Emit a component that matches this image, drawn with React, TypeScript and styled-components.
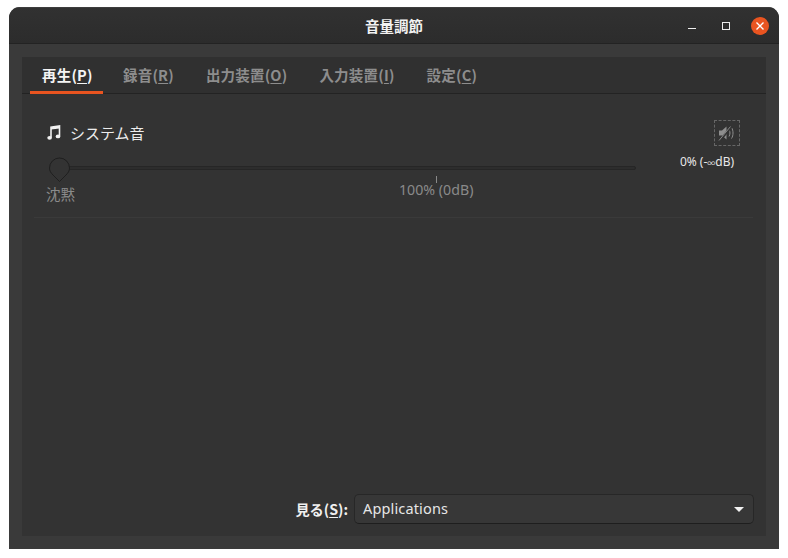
import React from "react";
import styled, { createGlobalStyle } from "styled-components";

const Global = createGlobalStyle`
  html, body { margin: 0; padding: 0; background: #fff; width: 788px; height: 558px; overflow: hidden; }
  body { font-family: "Noto Sans", "Noto Sans CJK JP", sans-serif; }
`;

const Win = styled.div`
  box-sizing: border-box;
  width: 770px;
  height: 542px;
  margin: 7px 0 0 9px;
  background: #3a3a3a;
  border-radius: 11px 11px 0 0;
  overflow: hidden;
  display: flex;
  flex-direction: column;
`;

const TitleBar = styled.div`
  box-sizing: border-box;
  height: 37px;
  flex: none;
  background: linear-gradient(#313131, #2c2c2c);
  border-top: 1px solid #3d3d3d;
  border-bottom: 1px solid #232323;
  position: relative;
  display: flex;
  align-items: center;
  justify-content: center;
`;

const Title = styled.div`
  color: #f2f2f2;
  font-family: "Noto Sans CJK JP", sans-serif;
  font-weight: 700;
  font-size: 14.5px;
  margin-top: -1px;
`;

const Controls = styled.div`
  position: absolute;
  right: 10px;
  top: 9px;
  display: flex;
  align-items: center;
  gap: 16px;
`;

const CtrlBtn = styled.div<{ $close?: boolean }>`
  width: 18px;
  height: 18px;
  border-radius: 50%;
  background: ${(p) => (p.$close ? "#e95420" : "transparent")};
  display: flex;
  align-items: center;
  justify-content: center;
`;

const Body = styled.div`
  flex: 1;
  min-height: 0;
  padding: 13px;
  display: flex;
`;

const Panel = styled.div`
  flex: 1;
  background: #333333;
  display: flex;
  flex-direction: column;
`;

const Tabs = styled.div`
  box-sizing: border-box;
  height: 37px;
  flex: none;
  background: #303030;
  border-bottom: 1px solid #232323;
  padding-left: 8px;
  display: flex;
`;

const Tab = styled.div<{ $active?: boolean }>`
  box-sizing: border-box;
  height: 37px;
  padding: 8px 12px 0 12px;
  width: ${(p) => (p.$active ? "73px" : "auto")};
  margin-right: 8px;
  text-align: center;
  font-family: "Noto Sans CJK JP", sans-serif;
  font-weight: 700;
  font-size: 14.5px;
  letter-spacing: 0.2px;
  line-height: 20px;
  color: ${(p) => (p.$active ? "#f4f4f4" : "#8d8d8d")};
  border-bottom: 3px solid ${(p) => (p.$active ? "#e95420" : "transparent")};
  white-space: nowrap;
  u { text-underline-offset: 2px; }
`;

const Content = styled.div`
  flex: 1;
  padding: 0 13px 0 12px;
`;

const Row = styled.div`
  box-sizing: border-box;
  height: 124px;
  border-bottom: 1px solid #3a3a3a;
  display: flex;
`;

const Left = styled.div`
  width: 617px;
  flex: none;
  padding-top: 28px;
`;

const Head = styled.div`
  display: flex;
  align-items: center;
  gap: 9px;
  margin-left: 13px;
  height: 20px;
  color: #ececec;
  font-family: "Noto Sans CJK JP", sans-serif;
  font-size: 15px;
`;

const NoteIcon = styled.svg`
  margin-top: 2px;
`;

const Slider = styled.div`
  position: relative;
  height: 24px;
  margin-top: 15px;
  margin-left: 15px;
  width: 587px;
`;

const Track = styled.div`
  position: absolute;
  left: 6px;
  right: 0;
  top: 9px;
  height: 2px;
  background: #2d2d2d;
  border: 1px solid #262626;
  border-radius: 2px;
`;

const Thumb = styled.svg`
  position: absolute;
  left: 0;
  top: 0;
`;

const Tick = styled.div`
  position: absolute;
  left: 387px;
  top: 19px;
  width: 1px;
  height: 7px;
  background: #8a8a8a;
`;

const Marks = styled.div`
  position: relative;
  height: 20px;
  margin-left: 12px;
  font-size: 14.2px;
  color: #8a8a8a;
  line-height: 20px;
`;

const ZeroMark = styled.span`
  position: absolute;
  left: 0;
  top: 3px;
  font-family: "Noto Sans CJK JP", sans-serif;
  font-size: 14.5px;
`;

const MidMark = styled.span`
  position: absolute;
  left: 353px;
  top: -1px;
  white-space: nowrap;
`;

const Right = styled.div`
  flex: 1;
  display: flex;
  flex-direction: column;
  align-items: flex-end;
  padding-top: 26px;
  padding-right: 13px;
`;

const MuteBtn = styled.div`
  box-sizing: border-box;
  width: 26px;
  height: 26px;
  border: 1px dashed #666;
  display: flex;
  align-items: center;
  justify-content: center;
`;

const Pct = styled.div`
  width: 84px;
  margin-top: 6px;
  text-align: center;
  margin-right: -21px;
  color: #e8e8e8;
  font-size: 12px;
  line-height: 20px;
  white-space: nowrap;
  position: relative;
  left: -12px;
`;

const InfinityMark = styled.span`
  font-size: 8px;
`;

const Footer = styled.div`
  box-sizing: border-box;
  flex: none;
  height: 42px;
  padding: 0 12px 0 0;
  display: flex;
  align-items: flex-start;
  justify-content: flex-end;
  gap: 6px;
`;

const FooterLabel = styled.div`
  height: 30px;
  line-height: 30px;
  color: #f0f0f0;
  font-family: "Noto Sans CJK JP", sans-serif;
  font-weight: 700;
  font-size: 14.2px;
  white-space: nowrap;
  u { text-underline-offset: 2px; }
`;

const Select = styled.div`
  box-sizing: border-box;
  width: 400px;
  height: 30px;
  background: #373737;
  border: 1px solid #272727;
  border-bottom-color: #1e1e1e;
  border-radius: 5px;
  display: flex;
  align-items: center;
  justify-content: space-between;
  padding: 0 9px 2px 8px;
  color: #e6e6e6;
  font-size: 14.5px;
  letter-spacing: 0.15px;
`;

const Caret = styled.div`
  width: 0;
  height: 0;
  margin-top: 2px;
  border-left: 5px solid transparent;
  border-right: 5px solid transparent;
  border-top: 5px solid #f2f2f2;
`;

export default function App() {
  return (
    <>
      <Global />
      <Win>
        <TitleBar>
          <Title>音量調節</Title>
          <Controls>
            <CtrlBtn>
              <svg width="10" height="10" viewBox="0 0 10 10"><path d="M1 7.5h8" stroke="#eee" strokeWidth="1" /></svg>
            </CtrlBtn>
            <CtrlBtn>
              <svg width="10" height="10" viewBox="0 0 10 10"><rect x="1.5" y="1.5" width="7" height="7" fill="none" stroke="#eee" strokeWidth="1" /></svg>
            </CtrlBtn>
            <CtrlBtn $close>
              <svg width="10" height="10" viewBox="0 0 10 10"><path d="M1.5 1.5l7 7M8.5 1.5l-7 7" stroke="#fff" strokeWidth="1.4" /></svg>
            </CtrlBtn>
          </Controls>
        </TitleBar>
        <Body>
          <Panel>
            <Tabs>
              <Tab $active>再生(<u>P</u>)</Tab>
              <Tab>録音(<u>R</u>)</Tab>
              <Tab>出力装置(<u>O</u>)</Tab>
              <Tab>入力装置(<u>I</u>)</Tab>
              <Tab>設定(<u>C</u>)</Tab>
            </Tabs>
            <Content>
              <Row>
                <Left>
                  <Head>
                    <NoteIcon width="14" height="16" viewBox="0 0 14 16">
                      <path d="M4 12.5V2.2L12.5 1v10" fill="none" stroke="#f2f2f2" strokeWidth="1.6" />
                      <path d="M4 2.2L12.5 1v2.4L4 4.6z" fill="#f2f2f2" />
                      <ellipse cx="2.6" cy="12.8" rx="2.3" ry="1.9" fill="#f2f2f2" />
                      <ellipse cx="11" cy="11.4" rx="2.3" ry="1.9" fill="#f2f2f2" />
                    </NoteIcon>
                    <span>システム音</span>
                  </Head>
                  <Slider>
                    <Track />
                    <Thumb width="22" height="26" viewBox="0 0 22 26">
                      <path d="M.5 11a10 10 0 0 1 20 0c0 3-1.5 5-3.5 7l-6.5 6.5L4 18C2 16 .5 14 .5 11z" fill="#333" stroke="#1f1f1f" strokeWidth="1" />
                    </Thumb>
                    <Tick />
                  </Slider>
                  <Marks>
                    <ZeroMark>沈黙</ZeroMark>
                    <MidMark>100% (0dB)</MidMark>
                  </Marks>
                </Left>
                <Right>
                  <MuteBtn>
                    <svg width="18" height="16" viewBox="0 0 18 16">
                      <path d="M1 5.5h3L8.5 1.5v13L4 10.5H1z" fill="#8e8e8e" />
                      <path d="M11 4.5c1.3 2 1.3 5 0 7M13.5 2.5c2 3 2 8 0 11" fill="none" stroke="#8e8e8e" strokeWidth="1" />
                      <path d="M2 15.5L13.5 1.5" stroke="#333" strokeWidth="2.4" />
                      <path d="M1 15.5L12.5 1.5" stroke="#8e8e8e" strokeWidth="0.9" />
                    </svg>
                  </MuteBtn>
                  <Pct>0% (-<InfinityMark>∞</InfinityMark>dB)</Pct>
                </Right>
              </Row>
            </Content>
            <Footer>
              <FooterLabel>見る(<u>S</u>):</FooterLabel>
              <Select>
                <span>Applications</span>
                <Caret />
              </Select>
            </Footer>
          </Panel>
        </Body>
      </Win>
    </>
  );
}
